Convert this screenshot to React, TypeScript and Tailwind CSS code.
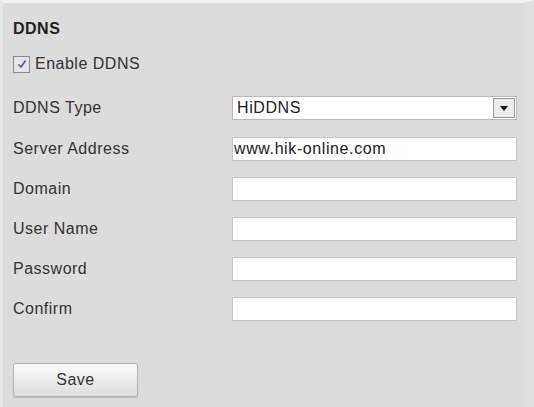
import React from 'react';

const fields = [
  { label: 'Server Address', value: 'www.hik-online.com' },
  { label: 'Domain', value: '' },
  { label: 'User Name', value: '' },
  { label: 'Password', value: '' },
  { label: 'Confirm', value: '' },
];

const Checkbox = () => (
  <span className="flex h-[17px] w-[17px] items-center justify-center border border-[#8a8a8a] bg-[#e4e4ea]">
    <svg width="12" height="12" viewBox="0 0 12 12">
      <path d="M2.5 6.5 L5 9 L9.5 2.5" fill="none" stroke="#5a55a8" strokeWidth="1.6" />
    </svg>
  </span>
);

const App = () => {
  return (
    <main
      className="h-[407px] w-[534px] overflow-hidden border-t-[3px] border-l-[3px] border-r-[10px] border-t-[#f3f3f3] border-l-[#e6e6e6] border-r-[#e0e0e0] bg-[#dcdcdc] text-[#333]"
      style={{ fontFamily: '"Liberation Sans", Arial, sans-serif' }}
    >
      <div className="flex flex-col pl-[10px] pt-[16px]">
        <h1 className="text-[16px] font-bold leading-[20px] tracking-[0.5px] text-[#222]">DDNS</h1>

        <label className="mt-[15px] flex h-[20px] items-center gap-[5px]">
          <Checkbox />
          <span className="text-[16px] tracking-[0.5px]">Enable DDNS</span>
        </label>

        <div className="mt-[22px] flex flex-col">
          <div className="mb-[17px] flex h-[24px] items-center">
            <span className="w-[219px] text-[16px] tracking-[0.5px]">DDNS Type</span>
            <div className="flex h-[24px] w-[285px] items-center justify-between border border-[#b8b8b8] bg-white pl-[4px] pr-[1px]">
              <span className="text-[16px] tracking-[0.6px] text-[#222]">HiDDNS</span>
              <span className="flex h-[20px] w-[22px] items-center justify-center border border-[#9a9a9a] bg-[#ebebeb]">
                <svg width="8" height="5" viewBox="0 0 8 5">
                  <path d="M0 0 H8 L4 5 Z" fill="#111" />
                </svg>
              </span>
            </div>
          </div>

          {fields.map(f => (
            <div key={f.label} className="mb-[16px] flex h-[24px] items-center">
              <span className="w-[219px] text-[16px] tracking-[0.5px]">{f.label}</span>
              <div className="flex h-[24px] w-[285px] items-center border border-[#c4c4c4] bg-white pl-[1px]">
                <span className="text-[16px] tracking-[0.6px] text-[#222]">{f.value}</span>
              </div>
            </div>
          ))}
        </div>

        <button className="mt-[26px] h-[34px] w-[125px] rounded-[3px] border border-[#b4b4b4] bg-gradient-to-b from-[#fafafa] to-[#dedede] text-[16px] tracking-[0.5px] text-[#333] shadow-[0_1px_1px_rgba(0,0,0,0.15)]">
          Save
        </button>
      </div>
    </main>
  );
};

export default App;
